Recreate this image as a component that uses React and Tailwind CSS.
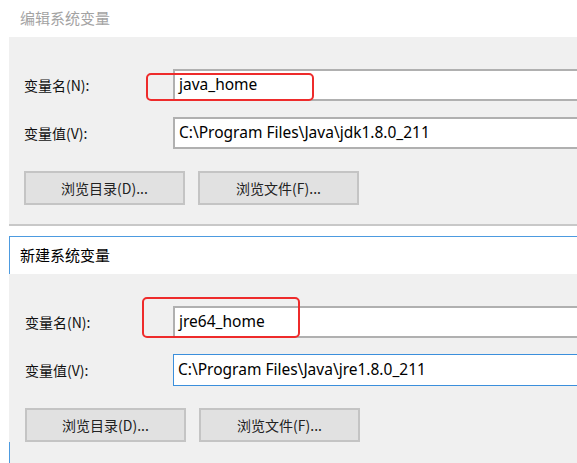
import React from "react";

const cjk = { fontFamily: '"Noto Sans CJK SC", "Noto Sans", sans-serif' };

function Field({ value, focused }) {
  return (
    <div
      className={`h-[32px] flex-1 bg-white flex items-center pl-[4px] text-[15.5px] text-black border-r-0 ${
        focused ? "border border-[#3b8fdc]" : "border-2 border-[#b0b0b0]"
      }`}
      style={{ fontFamily: '"Noto Sans", sans-serif' }}
    >
      {value}
    </div>
  );
}

function Btn({ children }) {
  return (
    <button className="w-[161px] h-[34px] bg-[#e1e1e1] border-2 border-[#c4c4c4] text-[14px] text-[#222]">
      {children}
    </button>
  );
}

function Body({ name, value, left, valueFocused }) {
  return (
    <div className="bg-[#f0f0f0] relative pt-[32px]" style={cjk}>
      {/* row: name */}
      <div className="flex items-center h-[32px]">
        <span className={`text-[14px] text-[#111] w-[164px] ${left}`}>变量名(N):</span>
        <Field value={name} />
      </div>
      {/* row: value */}
      <div className="flex items-center h-[32px] mt-[16px]">
        <span className={`text-[14px] text-[#111] w-[164px] ${left}`}>变量值(V):</span>
        <Field value={value} focused={valueFocused} />
      </div>
      {/* buttons */}
      <div className={`flex gap-[13px] mt-[22px] ${left}`}>
        <Btn>浏览目录(D)...</Btn>
        <Btn>浏览文件(F)...</Btn>
      </div>
    </div>
  );
}

export default function App() {
  return (
    <div className="w-[577px] h-[463px] bg-white relative overflow-hidden" style={cjk}>
      {/* 编辑系统变量 */}
      <div className="h-[37px] pl-[20px] flex items-center text-[15px] text-[#a3a3a3]">编辑系统变量</div>
      <div className="ml-[9px] h-[189px] bg-[#f0f0f0] border-b-2 border-[#c8c8c8]">
        <Body name="java_home" value="C:\Program Files\Java\jdk1.8.0_211" left="pl-[15px]" />
      </div>

      {/* 新建系统变量 */}
      <div className="mt-[10px] ml-[9px] border-l border-t border-[#4d9be0] h-[228px]">
        <div className="h-[37px] pl-[10px] flex items-center text-[15px] text-black bg-white">新建系统变量</div>
        <div className="h-[190px] bg-[#f0f0f0]">
          <div className="-ml-px">
            <Body name="jre64_home" value="C:\Program Files\Java\jre1.8.0_211" left="pl-[16px]" valueFocused />
          </div>
        </div>
      </div>

      {/* red annotation boxes */}
      <div className="absolute left-[146px] top-[73px] w-[168px] h-[28px] border-2 border-[#ee2b2b] rounded-[5px]" />
      <div className="absolute left-[142px] top-[297px] w-[158px] h-[41px] border-2 border-[#ee2b2b] rounded-[5px]" />
    </div>
  );
}
